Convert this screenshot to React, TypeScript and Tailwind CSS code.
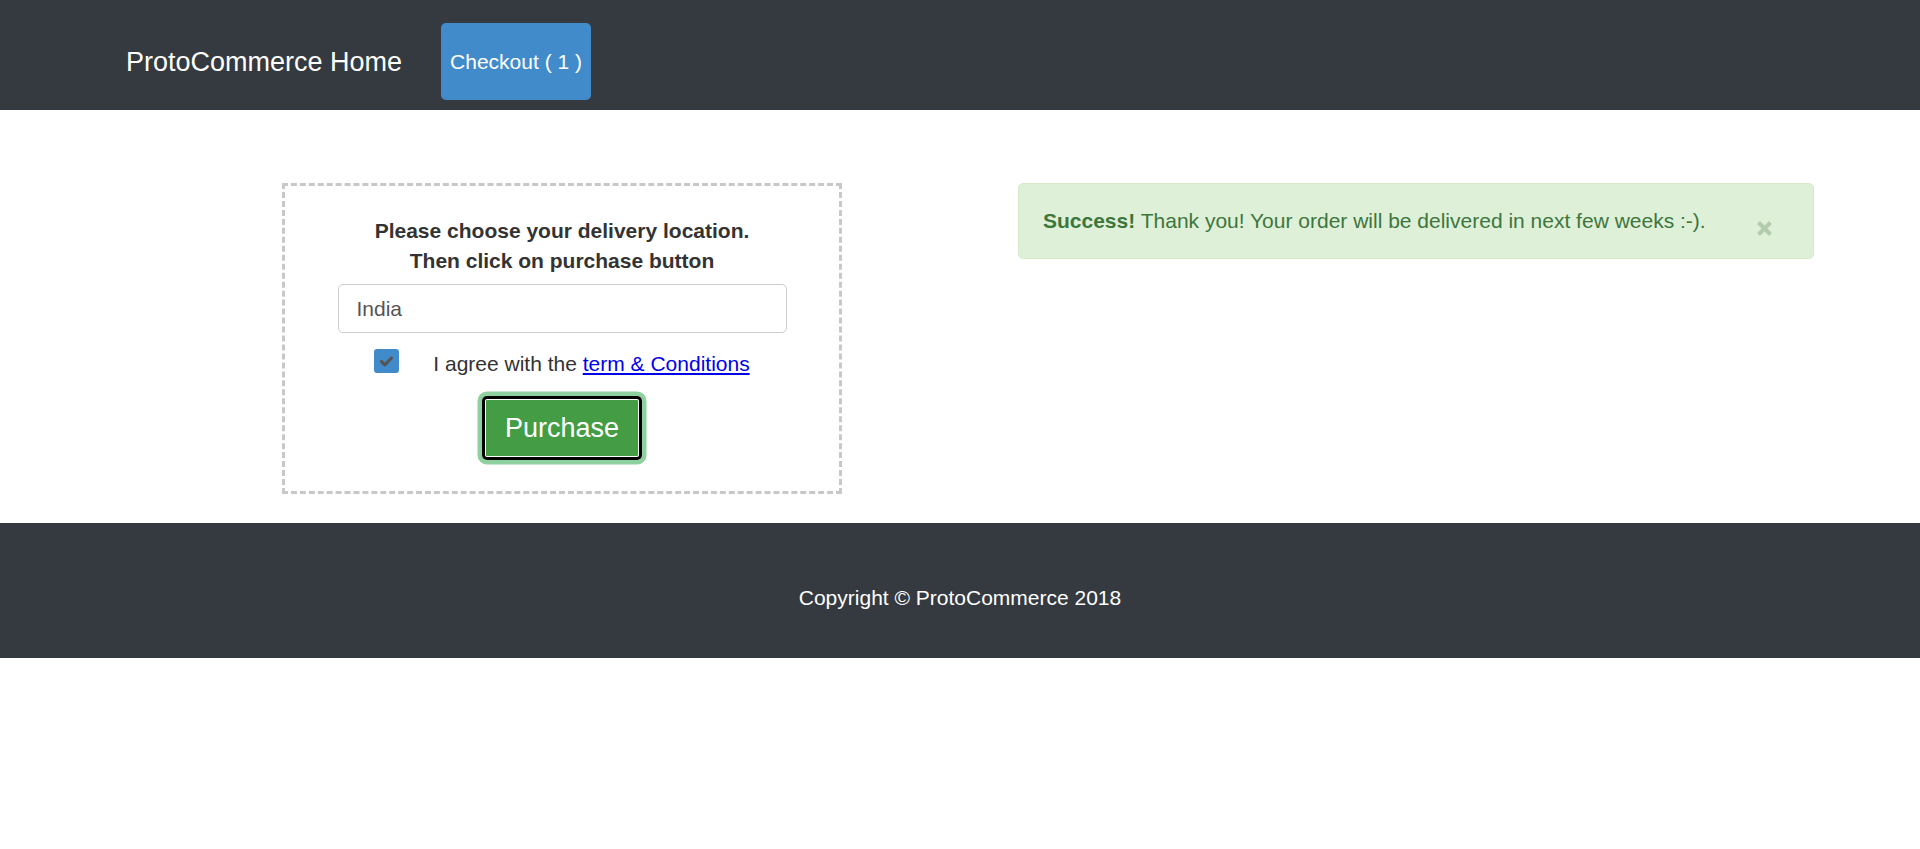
export default function App() {
  return (
    <div className="min-h-[849px] bg-white font-['Liberation_Sans',Arial,sans-serif]">
      <nav className="flex h-[110px] items-center bg-[#343a40] pl-[126px] pt-[13px]">
        <a className="text-[27px] leading-[40px] text-white">ProtoCommerce Home</a>
        <a className="ml-[39px] flex h-[77px] items-center rounded-[5px] bg-[#428bca] px-[9px] text-[21px] leading-[30px] text-white">
          Checkout ( 1 )
        </a>
      </nav>

      <main className="flex items-start pb-[29px] pl-[282px] pt-[73px]">
        <div className="flex w-[560px] flex-col items-center border-[3px] border-dashed border-[#c8c8c8] pb-[31px] pt-[30px]">
          <p className="text-center text-[21px] font-bold leading-[30px] text-[#333]">
            Please choose your delivery location.
            <br />
            Then click on purchase button
          </p>
          <input
            readOnly
            value="India"
            className="mt-[8px] h-[49px] w-[449px] rounded-[5px] border border-[#ccc] bg-white px-[18px] text-[21px] text-[#555] outline-none"
          />
          <div className="mt-[16px] flex items-start gap-[34px]">
            <span className="flex h-[24px] w-[25px] items-center justify-center rounded-[3px] bg-[#428bca]">
              <svg width="25" height="24" viewBox="0 0 25 24">
                <path d="M7.5 12.5 L10.8 15.8 L17.5 9" fill="none" stroke="#555" strokeWidth="3.2" strokeLinecap="round" strokeLinejoin="round" />
              </svg>
            </span>
            <span className="text-[21px] leading-[30px] text-[#333]">
              I agree with the <a className="text-[#0000ee] underline">term &amp; Conditions</a>
            </span>
          </div>
          <button className="mt-[17px] h-[64px] rounded-[5px] bg-[#449d44] px-[23px] text-[27px] leading-[40px] text-white shadow-[inset_0_0_0_3px_#000,inset_0_0_0_4px_#fff,0_0_0_4.5px_#8fd19e]">
            Purchase
          </button>
        </div>

        <div className="relative ml-[176px] w-[796px] rounded-[5px] border border-[#d6e9c6] bg-[#dff0d8] py-[22px] pl-[24px] pr-[60px] text-[21px] leading-[30px] text-[#3c763d]">
          <strong className="font-bold">Success!</strong> Thank you! Your order will be delivered in next few weeks :-).
          <span className="absolute right-[41px] top-[37px] block h-[15px] w-[15px]">
            <svg width="15" height="15" viewBox="0 0 15 15">
              <path d="M1.5 1.5 L13.5 13.5 M13.5 1.5 L1.5 13.5" stroke="#b4ccae" strokeWidth="4" />
            </svg>
          </span>
        </div>
      </main>

      <footer className="bg-[#343a40] pb-[45px] pt-[60px] text-center text-[21px] leading-[30px] text-white">
        Copyright © ProtoCommerce 2018
      </footer>
    </div>
  );
}
